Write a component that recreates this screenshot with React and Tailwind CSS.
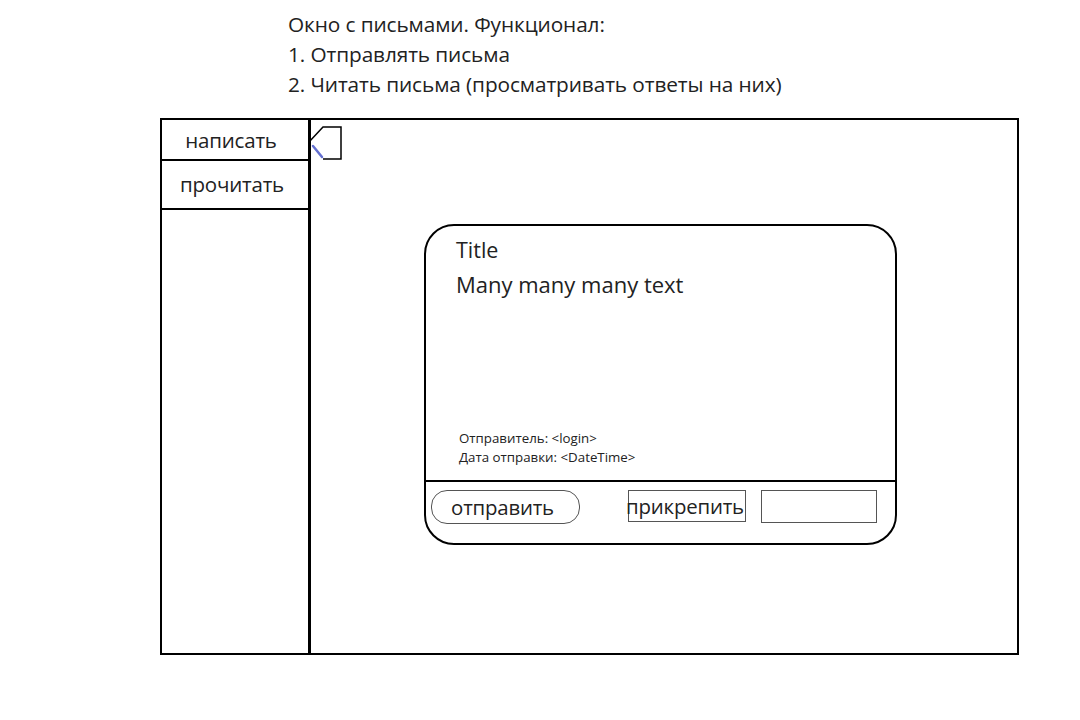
export default function App() {
  return (
    <div className="w-[1080px] h-[720px] bg-white text-[#222] font-['Open_Sans','Noto_Sans',sans-serif]">
      {/* Описание */}
      <div className="pl-[288px] pt-[9px] text-[20.8px] leading-[30px] tracking-[-0.1px]">
        <p>Окно с письмами. Функционал:</p>
        <p>1. Отправлять письма</p>
        <p>2. Читать письма (просматривать ответы на них)</p>
      </div>

      {/* Окно */}
      <div className="ml-[160px] mt-[19px] w-[859px] h-[537px] border-2 border-black flex">
        <div className="w-[149px] border-r-[3px] border-black flex flex-col">
          <div className="h-[41px] border-b-2 border-black flex items-center justify-center text-[20.5px] tracking-[-0.2px] pr-[8px] pt-[2px]">
            написать
          </div>
          <div className="h-[49px] border-b-2 border-black flex items-center justify-center text-[20.5px] tracking-[-0.2px] pr-[6px]">
            прочитать
          </div>
        </div>

        <div className="flex-1 relative">
          <svg className="absolute left-[-3px] top-[4px]" width="36" height="36" viewBox="0 0 36 36">
            <path d="M1 18 L15 3 L33 3 L33 35 L15 35" fill="none" stroke="#000" strokeWidth="1.5" />
            <path d="M5 22 L14 33" stroke="#6470d0" strokeWidth="2.5" strokeLinecap="round" />
          </svg>

          <div className="ml-[113px] mt-[104px] w-[473px] h-[321px] border-2 border-black rounded-[30px] flex flex-col">
            <div className="h-[256px] border-b-2 border-black flex flex-col pl-[30px] pt-[8px]">
              <p className="text-[21.5px] leading-[32px]">Title</p>
              <p className="text-[22px] leading-[36px]">Many many many text</p>
              <div className="mt-auto mb-[13px] pl-[3px] text-[13.3px] leading-[19px]">
                <p>Отправитель: &lt;login&gt;</p>
                <p>Дата отправки: &lt;DateTime&gt;</p>
              </div>
            </div>
            <div className="flex items-start pt-[8px] pl-[5px]">
              <div className="w-[149px] h-[34px] border-[1.5px] border-[#555] rounded-[16px] flex items-center justify-center text-[20.4px] tracking-[-0.2px] pr-[6px]">
                отправить
              </div>
              <div className="ml-[48px] w-[118px] h-[32px] border-[1.5px] border-[#555] flex items-center justify-center text-[20.4px] tracking-[-0.2px] whitespace-nowrap pr-[4px]">
                прикрепить
              </div>
              <div className="ml-[15px] w-[116px] h-[33px] border-[1.5px] border-[#555]"></div>
            </div>
          </div>
        </div>
      </div>
    </div>
  );
}
